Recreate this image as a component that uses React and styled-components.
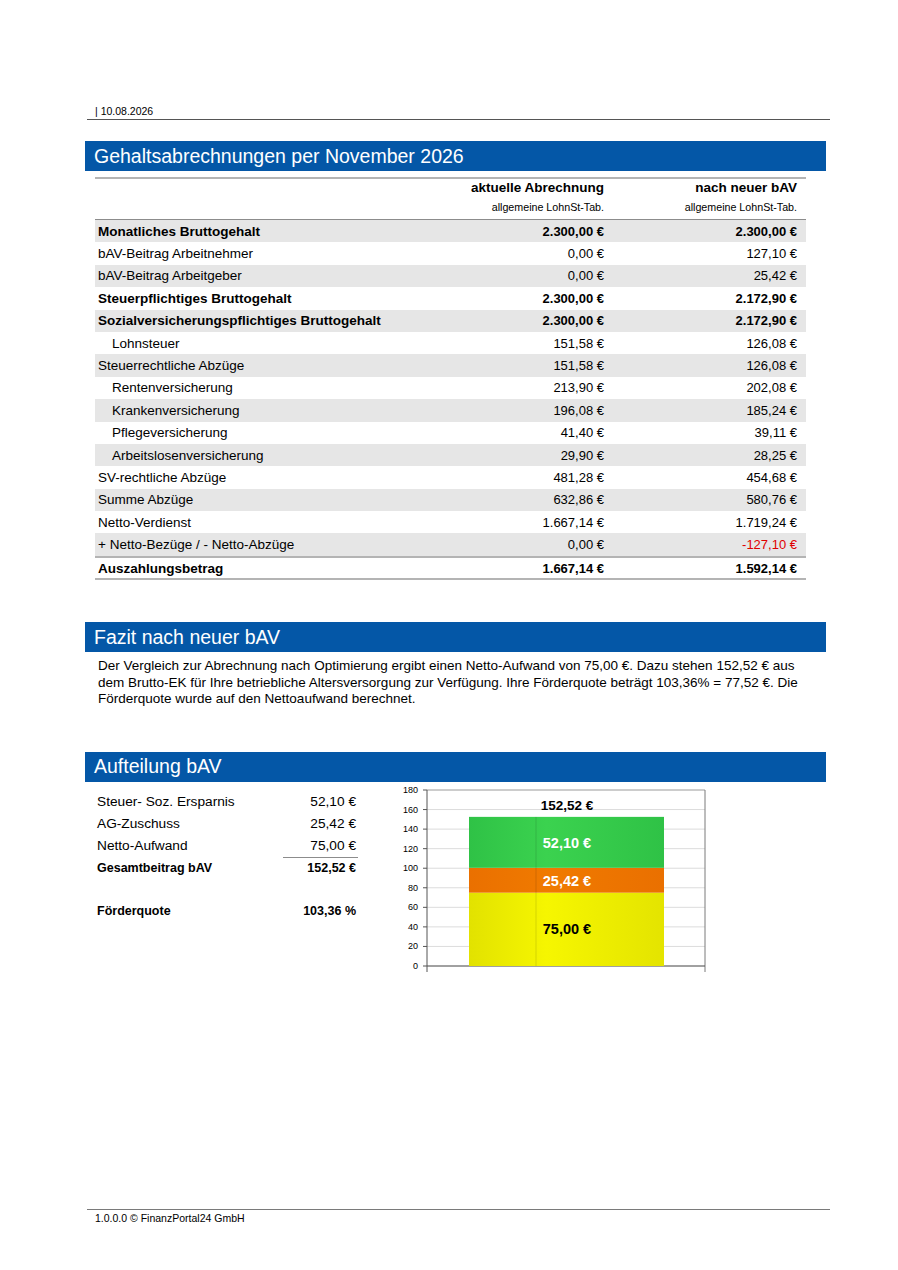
import React from "react";
import styled, { createGlobalStyle } from "styled-components";

const GlobalStyle = createGlobalStyle`
  body {
    margin: 0;
    background: #ffffff;
    font-family: "Liberation Sans", Arial, sans-serif;
    color: #000000;
  }
`;

const Page = styled.div`
  width: 898px;
  height: 1270px;
  box-sizing: border-box;
  padding: 105px 68px 46px 87px;
  display: flex;
  flex-direction: column;
`;

const TopLine = styled.div`
  font-size: 10.5px;
  line-height: 12px;
  padding: 0 0 2px 8px;
  border-bottom: 1px solid #555555;
`;

const SectionBar = styled.div`
  margin-left: -2px;
  width: 741px;
  height: 30px;
  box-sizing: border-box;
  margin-top: ${(p) => p.top}px;
  padding-left: 9px;
  background: #0457a7;
  color: #ffffff;
  font-size: 19.5px;
  display: flex;
  align-items: center;
`;

const Table = styled.div`
  margin: 6px 0 0 8px;
  width: 711px;
  border-top: 2px solid #b4b4b4;
  border-bottom: 2px solid #b4b4b4;
`;

const HeadRow = styled.div`
  display: grid;
  grid-template-columns: 318px 200px 193px;
  height: 40px;
  border-bottom: 1px solid #8c8c8c;
  align-items: start;
`;

const HeadCell = styled.div`
  text-align: right;
  padding-right: 9px;
`;

const HeadTitle = styled.div`
  font-size: 13.5px;
  font-weight: bold;
  line-height: 16px;
  padding-top: 1px;
`;

const HeadSub = styled.div`
  font-size: 10.7px;
  line-height: 12px;
  margin-top: 5px;
`;

const Row = styled.div`
  display: grid;
  grid-template-columns: 318px 200px 193px;
  height: 22.4px;
  align-items: center;
  font-size: 13px;
  font-weight: ${(p) => (p.bold ? "bold" : "normal")};
  background: ${(p) => (p.shaded ? "#e6e6e6" : "#ffffff")};
  border-top: ${(p) => (p.ruled ? "2px solid #b4b4b4" : "none")};
  box-sizing: border-box;
`;

const Label = styled.div`
  padding-left: ${(p) => (p.indent ? 17 : 3)}px;
  font-size: 13.5px;
  white-space: nowrap;
`;

const Value = styled.div`
  text-align: right;
  padding-right: 9px;
  color: ${(p) => (p.negative ? "#e00000" : "#000000")};
`;

const Paragraph = styled.p`
  margin: 6px 0 0 11px;
  width: 712px;
  font-size: 13.5px;
  line-height: 16.5px;
`;

const SplitArea = styled.div`
  display: flex;
  align-items: flex-start;
`;

const Summary = styled.div`
  margin: 9px 0 0 10px;
  width: 261px;
  display: grid;
  grid-template-columns: 186px 75px;
`;

const SumLabel = styled.div`
  height: 22px;
  display: flex;
  align-items: center;
  font-size: ${(p) => (p.bold ? 12.5 : 13.7)}px;
  font-weight: ${(p) => (p.bold ? "bold" : "normal")};
  margin-top: ${(p) => p.gap || 0}px;
`;

const SumValue = styled(SumLabel)`
  justify-content: flex-end;
  padding-right: 2px;
  border-top: ${(p) => (p.ruled ? "1px solid #8c8c8c" : "none")};
  box-sizing: border-box;
`;

const ChartBox = styled.div`
  margin-left: 34px;
  width: 320px;
  height: 195px;
`;

const Footer = styled.div`
  margin-top: auto;
  border-top: 1px solid #7a7a7a;
  padding: 2px 0 0 8px;
  font-size: 10.5px;
  line-height: 12px;
`;

const rows = [
  { label: "Monatliches Bruttogehalt", a: "2.300,00 €", b: "2.300,00 €", bold: true },
  { label: "bAV-Beitrag Arbeitnehmer", a: "0,00 €", b: "127,10 €" },
  { label: "bAV-Beitrag Arbeitgeber", a: "0,00 €", b: "25,42 €" },
  { label: "Steuerpflichtiges Bruttogehalt", a: "2.300,00 €", b: "2.172,90 €", bold: true },
  { label: "Sozialversicherungspflichtiges Bruttogehalt", a: "2.300,00 €", b: "2.172,90 €", bold: true },
  { label: "Lohnsteuer", a: "151,58 €", b: "126,08 €", indent: true },
  { label: "Steuerrechtliche Abzüge", a: "151,58 €", b: "126,08 €" },
  { label: "Rentenversicherung", a: "213,90 €", b: "202,08 €", indent: true },
  { label: "Krankenversicherung", a: "196,08 €", b: "185,24 €", indent: true },
  { label: "Pflegeversicherung", a: "41,40 €", b: "39,11 €", indent: true },
  { label: "Arbeitslosenversicherung", a: "29,90 €", b: "28,25 €", indent: true },
  { label: "SV-rechtliche Abzüge", a: "481,28 €", b: "454,68 €" },
  { label: "Summe Abzüge", a: "632,86 €", b: "580,76 €" },
  { label: "Netto-Verdienst", a: "1.667,14 €", b: "1.719,24 €" },
  { label: "+ Netto-Bezüge / - Netto-Abzüge", a: "0,00 €", b: "-127,10 €", negative: true },
  { label: "Auszahlungsbetrag", a: "1.667,14 €", b: "1.592,14 €", bold: true, ruled: true },
];

// chart geometry
const X0 = 35;
const X1 = 313;
const Y0 = 184;
const S = 176 / 180;
const y = (v) => Y0 - v * S;
const BAR_L = 77;
const BAR_R = 272;

const segments = [
  { from: 0, to: 75, id: "gYellow", c1: "#e2e200", c2: "#f6f600", c3: "#e4e400" },
  { from: 75, to: 100.42, id: "gOrange", c1: "#ea7000", c2: "#f07a00", c3: "#ea7000" },
  { from: 100.42, to: 152.52, id: "gGreen", c1: "#2fc246", c2: "#3bd24f", c3: "#2fc246" },
];

const BavChart = () => {
  const ticks = [0, 20, 40, 60, 80, 100, 120, 140, 160, 180];
  return (
    <svg width="320" height="195" viewBox="0 0 320 195">
      <defs>
        {segments.map((s) => (
          <linearGradient key={s.id} id={s.id} x1="0" x2="1" y1="0" y2="0">
            <stop offset="0" stopColor={s.c1} />
            <stop offset="0.4" stopColor={s.c2} />
            <stop offset="1" stopColor={s.c3} />
          </linearGradient>
        ))}
      </defs>
      {ticks.map((t) => (
        <g key={t}>
          <line x1={X0} x2={X1} y1={y(t)} y2={y(t)} stroke={t === 180 ? "#9a9a9a" : "#dcdcdc"} strokeWidth="1" />
          <line x1={X0 - 4} x2={X0} y1={y(t)} y2={y(t)} stroke="#555" strokeWidth="1" />
          <text x={X0 - 9} y={y(t) + 3} fontSize="9" textAnchor="end" fill="#000" fontFamily="Liberation Sans, Arial, sans-serif">
            {t}
          </text>
        </g>
      ))}
      <line x1={X0} x2={X0} y1={y(180)} y2={190} stroke="#555" strokeWidth="1" />
      <line x1={X1} x2={X1} y1={y(180)} y2={190} stroke="#7a7a7a" strokeWidth="1" />
      <line x1={X0} x2={X1} y1={Y0} y2={Y0} stroke="#555" strokeWidth="1" />
      {segments.map((s) => (
        <rect key={s.id} x={BAR_L} y={y(s.to)} width={BAR_R - BAR_L} height={y(s.from) - y(s.to)} fill={`url(#${s.id})`} />
      ))}
      <line x1="144" x2="144" y1={y(152.52)} y2={Y0} stroke="rgba(0,0,0,0.12)" strokeWidth="1" />
      <g fontFamily="Liberation Sans, Arial, sans-serif" fontWeight="bold" textAnchor="middle">
        <text x="175" y="28" fontSize="13.5" fill="#000">152,52 €</text>
        <text x="175" y="66" fontSize="14.5" fill="#ffffff">52,10 €</text>
        <text x="175" y="104" fontSize="14.5" fill="#ffffff">25,42 €</text>
        <text x="175" y="152" fontSize="14.5" fill="#000">75,00 €</text>
      </g>
    </svg>
  );
};

export default function App() {
  return (
    <>
      <GlobalStyle />
      <Page>
        <TopLine>| 10.08.2026</TopLine>
        <SectionBar top={21}>Gehaltsabrechnungen per November 2026</SectionBar>
        <Table>
          <HeadRow>
            <div />
            <HeadCell>
              <HeadTitle>aktuelle Abrechnung</HeadTitle>
              <HeadSub>allgemeine LohnSt-Tab.</HeadSub>
            </HeadCell>
            <HeadCell>
              <HeadTitle>nach neuer bAV</HeadTitle>
              <HeadSub>allgemeine LohnSt-Tab.</HeadSub>
            </HeadCell>
          </HeadRow>
          {rows.map((r, i) => (
            <Row key={r.label} bold={r.bold} shaded={i % 2 === 0} ruled={r.ruled}>
              <Label indent={r.indent}>{r.label}</Label>
              <Value>{r.a}</Value>
              <Value negative={r.negative}>{r.b}</Value>
            </Row>
          ))}
        </Table>

        <SectionBar top={42}>Fazit nach neuer bAV</SectionBar>
        <Paragraph>
          Der Vergleich zur Abrechnung nach Optimierung ergibt einen Netto-Aufwand von 75,00 €. Dazu stehen 152,52 € aus
          dem Brutto-EK für Ihre betriebliche Altersversorgung zur Verfügung. Ihre Förderquote beträgt 103,36% = 77,52 €. Die
          Förderquote wurde auf den Nettoaufwand berechnet.
        </Paragraph>

        <SectionBar top={44}>Aufteilung bAV</SectionBar>
        <SplitArea>
          <Summary>
            <SumLabel>Steuer- Soz. Ersparnis</SumLabel>
            <SumValue>52,10 €</SumValue>
            <SumLabel>AG-Zuschuss</SumLabel>
            <SumValue>25,42 €</SumValue>
            <SumLabel>Netto-Aufwand</SumLabel>
            <SumValue>75,00 €</SumValue>
            <SumLabel bold>Gesamtbeitrag bAV</SumLabel>
            <SumValue bold ruled>152,52 €</SumValue>
            <SumLabel bold gap={21}>Förderquote</SumLabel>
            <SumValue bold gap={21}>103,36 %</SumValue>
          </Summary>
          <ChartBox>
            <BavChart />
          </ChartBox>
        </SplitArea>

        <Footer>1.0.0.0 © FinanzPortal24 GmbH</Footer>
      </Page>
    </>
  );
}
